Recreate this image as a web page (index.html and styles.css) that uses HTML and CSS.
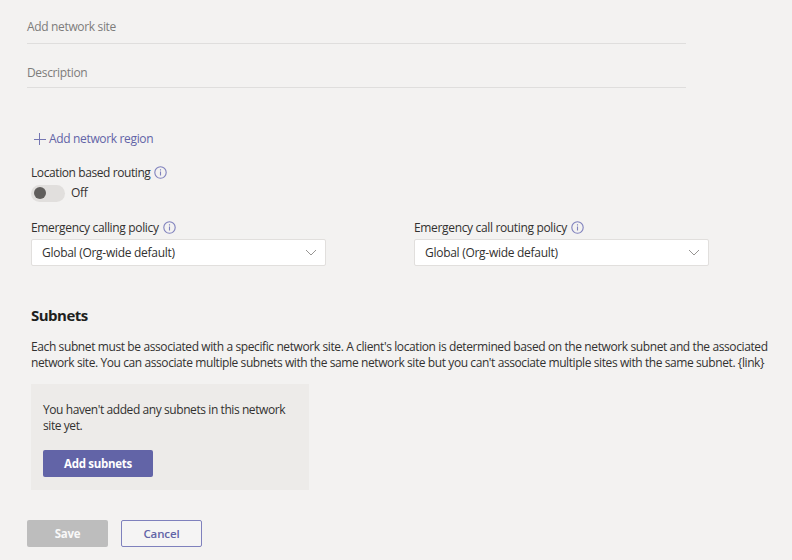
FILE: index.html
```html
<!DOCTYPE html>
<html lang="en">
<head>
<meta charset="utf-8">
<title>Add network site</title>
<link rel="stylesheet" href="styles.css">
</head>
<body>
<main class="page">
  <div class="field field-name"><span>Add network site</span></div>
  <div class="field field-desc"><span>Description</span></div>
  <div class="region"><svg class="plus" viewBox="0 0 12 12"><path d="M5.5 0V12M0 6.5H12"/></svg><span>Add network region</span></div>
  <div class="label lbr"><span>Location based routing</span><svg class="info" viewBox="0 0 13 13"><circle cx="6.5" cy="6.5" r="5.7"/><path d="M6.5 5.6V9.6M6.5 3.3V4.5"/></svg></div>
  <div class="toggle-row"><span class="toggle"><span class="knob"></span></span><span>Off</span></div>
  <div class="policies">
    <div class="policy">
      <div class="label"><span>Emergency calling policy</span><svg class="info" viewBox="0 0 13 13"><circle cx="6.5" cy="6.5" r="5.7"/><path d="M6.5 5.6V9.6M6.5 3.3V4.5"/></svg></div>
      <div class="select"><span>Global (Org-wide default)</span><svg class="chevron" viewBox="0 0 12 7"><path d="M1 1L6 6L11 1"/></svg></div>
    </div>
    <div class="policy">
      <div class="label"><span>Emergency call routing policy</span><svg class="info" viewBox="0 0 13 13"><circle cx="6.5" cy="6.5" r="5.7"/><path d="M6.5 5.6V9.6M6.5 3.3V4.5"/></svg></div>
      <div class="select"><span>Global (Org-wide default)</span><svg class="chevron" viewBox="0 0 12 7"><path d="M1 1L6 6L11 1"/></svg></div>
    </div>
  </div>
  <h2>Subnets</h2>
  <p class="intro"><span>Each subnet must be associated with a specific network site. A client's location is determined based on the network subnet and the associated</span><br><span class="intro-end">network site. You can associate multiple subnets with the same network site but you can't associate multiple sites with the same subnet. {link}</span></p>
  <section class="empty">
    <p><span>You haven't added any subnets in this network</span><br><span>site yet.</span></p>
    <button class="btn add">Add subnets</button>
  </section>
  <div class="actions"><button class="btn save">Save</button><button class="btn cancel">Cancel</button></div>
</main>
</body>
</html>
```
FILE: styles.css
```css
* { box-sizing: border-box; }
body { margin: 0; background: #f3f2f1; color: #323130; font: 12px/16px "Open Sans", "Noto Sans", sans-serif; letter-spacing: -0.34px; }
.page { width: 792px; height: 560px; overflow: hidden; padding: 10px 0 0 31px; }
span { white-space: nowrap; }
.field { width: 659px; margin-left: -4px; border-bottom: 1px solid #dfdedd; color: #7d7c7b; }
.field-name { height: 34px; padding-top: 9px; }
.field-desc { height: 44px; padding-top: 21px; }
.region { display: flex; align-items: center; gap: 3px; height: 16px; margin: 43px 0 0 3px; color: #6264a7; }
.plus { width: 12px; height: 12px; fill: none; stroke: #7577b3; }
.label { display: flex; align-items: center; gap: 4px; height: 16px; }
.lbr { margin-top: 18px; letter-spacing: -0.41px; }
.info { width: 13px; height: 13px; margin-top: -1px; fill: none; stroke: #7f81bd; stroke-width: 1.1; }
.toggle-row { display: flex; align-items: center; gap: 6px; height: 18px; margin-top: 3px; }
.toggle { width: 34px; height: 17px; padding: 2.5px 3px; border-radius: 9px; background: #e1dfdd; }
.knob { display: block; width: 12px; height: 12px; border-radius: 50%; background: #605e5c; }
.policies { display: flex; gap: 88px; margin-top: 18px; }
.policy { width: 295px; }
.select { display: flex; align-items: center; justify-content: space-between; height: 27px; margin-top: 3px; padding: 0 8px 0 10px; border: 1px solid #e1dfdd; border-radius: 2px; background: #fff; letter-spacing: -0.28px; }
.chevron { width: 12px; height: 7px; fill: none; stroke: #979593; }
h2 { margin: 39px 0 0; color: #201f1e; font-size: 15px; line-height: 20px; font-weight: 700; letter-spacing: -0.5px; }
.intro { margin: 14px 0 0; letter-spacing: -0.393px; }
.intro-end { letter-spacing: -0.412px; }
.empty { width: 278px; height: 106px; margin-top: 13px; padding: 18px 12px; background: #edebe9; letter-spacing: -0.42px; }
.empty p { margin: 0; }
.btn { display: block; height: 27px; padding: 0; border: 1px solid transparent; border-radius: 2px; font: 700 11.5px/16px "Open Sans", "Noto Sans", sans-serif; letter-spacing: -0.3px; text-align: center; }
.add { width: 110px; margin-top: 16px; background: #6264a7; color: #fff; }
.actions { display: flex; gap: 13px; margin: 30px 0 0 -4px; }
.save { width: 81px; background: #bdbdbd; color: #f8f8f8; }
.cancel { width: 81px; border-color: #7f81bd; background: #f5f4f4; color: #6264a7; font-weight: 600; letter-spacing: -0.1px; }
```
